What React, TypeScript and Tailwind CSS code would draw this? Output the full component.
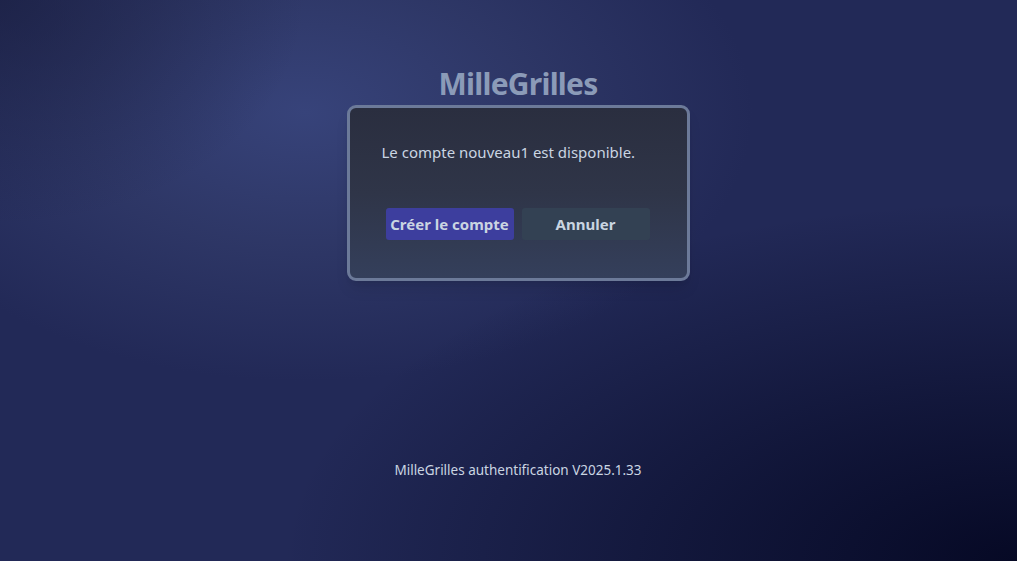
export default function App() {
  return (
    <div
      className="relative flex min-h-screen w-full flex-col items-center overflow-hidden text-slate-300"
      style={{ fontFamily: '"Noto Sans", "Open Sans", sans-serif' }}
    >
      <div className="absolute inset-0 bg-[#222957]" />
      <div className="absolute inset-0 bg-[radial-gradient(ellipse_55%_60%_at_30%_20%,#37437a_0%,rgba(52,62,110,0.65)_40%,rgba(34,41,87,0)_80%)]" />
      <div className="absolute inset-0 bg-[radial-gradient(ellipse_90%_80%_at_100%_100%,#060925_0%,rgba(12,16,48,0.75)_35%,rgba(34,41,87,0)_80%)]" />
      <div className="absolute inset-0 bg-[radial-gradient(ellipse_30%_40%_at_0%_0%,rgba(24,28,60,0.6)_0%,rgba(24,28,60,0)_100%)]" />

      <div className="relative flex w-full flex-col items-center pl-[19px]">
        <h1 className="mt-[63px] text-[30px] font-bold leading-[42px] tracking-tight text-[#8b9bb8]">
          MilleGrilles
        </h1>

        <div className="h-[176px] w-[343px] rounded-[9px] border-[3px] border-[#6c7a99] bg-[linear-gradient(180deg,#2a2e3f_0%,#2f3548_50%,#343f5b_100%)] px-[32px] pt-[32px] shadow-lg">
          <p className="text-[15px] leading-6 text-slate-300">
            Le compte nouveau1 est disponible.
          </p>
          <div className="mt-[44px] flex gap-2 pl-1">
            <button className="h-[32px] w-[128px] rounded-[3px] bg-[#3d3e9e] text-[15px] font-bold text-slate-300">
              Créer le compte
            </button>
            <button className="h-[32px] w-[128px] rounded-[3px] bg-[#334153] text-[15px] font-bold text-slate-300">
              Annuler
            </button>
          </div>
        </div>

        <p className="mt-[179px] text-[13.5px] leading-5 text-slate-300">
          MilleGrilles authentification V2025.1.33
        </p>
      </div>
    </div>
  );
}
